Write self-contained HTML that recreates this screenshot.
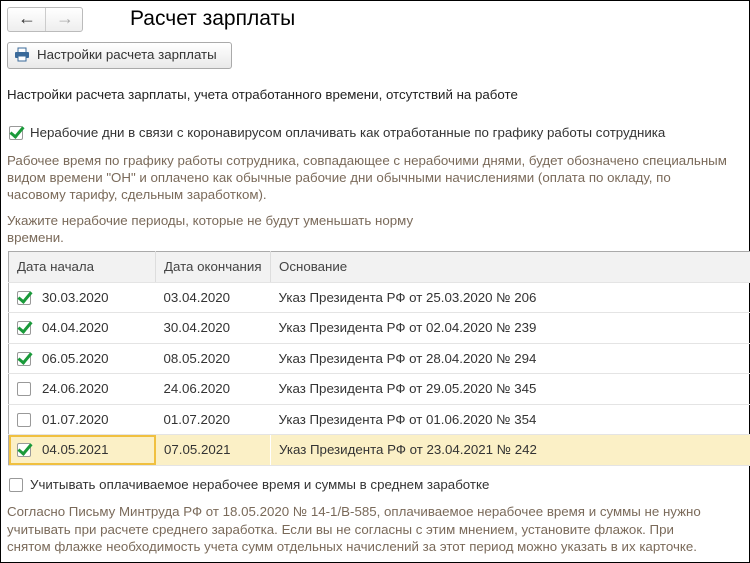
<!DOCTYPE html>
<html><head><meta charset="utf-8"><style>
body{margin:0;width:750px;height:563px;background:#fff;font-family:"Liberation Sans",sans-serif;font-size:13.3px;color:#333;position:relative;overflow:hidden}
.frame{position:absolute;left:0;top:0;width:748px;height:561px;border:1px solid #000}
.a{position:absolute;white-space:nowrap}
.br{color:#7a6a5a}
.cb{position:absolute;width:12px;height:12px;border:1px solid #999;background:#fff;border-radius:2px}
.cb.on::after{content:"";position:absolute;left:3px;top:-3px;width:5px;height:11px;border:solid #1a9a3a;border-width:0 3px 3px 0;transform:rotate(40deg)}
table{position:absolute;left:8px;top:251px;width:744px;border-collapse:collapse;border:1px solid #aaa}
td{height:29.5px;padding:0 0 0 8px;border-bottom:1px solid #e4e4e4;position:relative;white-space:nowrap}
tr.h td{background:#f2f2f2;border-right:1px solid #ddd;color:#444}
tr.sel td{background:#fbf0c6}
</style></head><body>
<div class="frame"></div>
<div class="a" style="left:7px;top:7px;width:74px;height:23px;border:1px solid #bbb;border-radius:3px;background:linear-gradient(#fff,#eee)"></div>
<div class="a" style="left:45px;top:8px;width:1px;height:23px;background:#ccc"></div>
<div class="a" style="left:18px;top:8px;font-size:18px;color:#333">&#x2190;</div>
<div class="a" style="left:56px;top:8px;font-size:18px;color:#aaa">&#x2192;</div>
<div class="a" style="left:130px;top:7px;font-size:21px;color:#000">Расчет зарплаты</div>
<div class="a" style="left:7px;top:42px;width:223px;height:25px;border:1px solid #aaa;border-radius:3px;background:linear-gradient(#fff,#e9e9e9)"></div>
<svg class="a" style="left:14px;top:47px" width="16" height="15"><rect x="4" y="1" width="8" height="5" fill="#fff" stroke="#3a6a9a"/><rect x="1" y="5" width="14" height="6" rx="1" fill="#3a6a9a"/><rect x="4" y="9" width="8" height="5" fill="#fff" stroke="#3a6a9a"/></svg>
<div class="a" style="left:37px;top:47px">Настройки расчета зарплаты</div>
<div class="a" style="left:7px;top:87px;color:#222">Настройки расчета зарплаты, учета отработанного времени, отсутствий на работе</div>
<div class="cb on" style="left:9px;top:126px"></div>
<div class="a" style="left:30px;top:125px">Нерабочие дни в связи с коронавирусом оплачивать как отработанные по графику работы сотрудника</div>
<div class="a br" style="left:7px;top:152px;line-height:17px">Рабочее время по графику работы сотрудника, совпадающее с нерабочими днями, будет обозначено специальным<br>видом времени "ОН" и оплачено как обычные рабочие дни обычными начислениями (оплата по окладу, по<br>часовому тарифу, сдельным заработком).</div>
<div class="a br" style="left:7px;top:212px;line-height:17px">Укажите нерабочие периоды, которые не будут уменьшать норму<br>времени.</div>
<table>
<tr class="h"><td style="width:138px">Дата начала</td><td style="width:106px">Дата окончания</td><td>Основание</td></tr>
<tr><td><span class="cb on" style="left:8px;top:8px"></span><span style="padding-left:25px">30.03.2020</span></td><td>03.04.2020</td><td>Указ Президента РФ от 25.03.2020 № 206</td></tr>
<tr><td><span class="cb on" style="left:8px;top:8px"></span><span style="padding-left:25px">04.04.2020</span></td><td>30.04.2020</td><td>Указ Президента РФ от 02.04.2020 № 239</td></tr>
<tr><td><span class="cb on" style="left:8px;top:8px"></span><span style="padding-left:25px">06.05.2020</span></td><td>08.05.2020</td><td>Указ Президента РФ от 28.04.2020 № 294</td></tr>
<tr><td><span class="cb" style="left:8px;top:8px"></span><span style="padding-left:25px">24.06.2020</span></td><td>24.06.2020</td><td>Указ Президента РФ от 29.05.2020 № 345</td></tr>
<tr><td><span class="cb" style="left:8px;top:8px"></span><span style="padding-left:25px">01.07.2020</span></td><td>01.07.2020</td><td>Указ Президента РФ от 01.06.2020 № 354</td></tr>
<tr class="sel"><td style="outline:2px solid #f0c040;outline-offset:-2px;border-right:1px solid #fff"><span class="cb on" style="left:8px;top:8px"></span><span style="padding-left:25px">04.05.2021</span></td><td style="border-right:1px solid #fff">07.05.2021</td><td>Указ Президента РФ от 23.04.2021 № 242</td></tr>
</table>
<div class="cb" style="left:9px;top:478px"></div>
<div class="a" style="left:30px;top:477px">Учитывать оплачиваемое нерабочее время и суммы в среднем заработке</div>
<div class="a br" style="left:7px;top:503px;line-height:17.5px">Согласно Письму Минтруда РФ от 18.05.2020 № 14-1/В-585, оплачиваемое нерабочее время и суммы не нужно<br>учитывать при расчете среднего заработка. Если вы не согласны с этим мнением, установите флажок. При<br>снятом флажке необходимость учета сумм отдельных начислений за этот период можно указать в их карточке.</div>
</body></html>
